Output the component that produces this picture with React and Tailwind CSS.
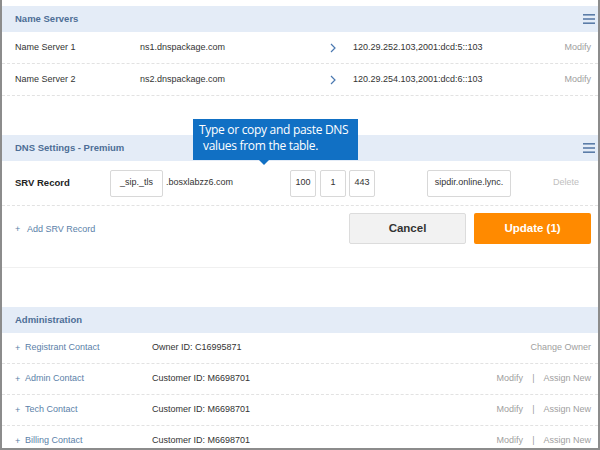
import React from 'react';

const font = { fontFamily: '"Liberation Sans", Arial, sans-serif' };

function Hamburger() {
  return (
    <svg width="12" height="10" viewBox="0 0 12 10" className="shrink-0">
      <rect x="0" y="0" width="12" height="1.6" fill="#5b7ca8" />
      <rect x="0" y="4.2" width="12" height="1.6" fill="#5b7ca8" />
      <rect x="0" y="8.4" width="12" height="1.6" fill="#5b7ca8" />
    </svg>
  );
}

function SectionHeader({ title, menu }) {
  return (
    <div className="h-[26px] bg-[#e4ecf7] flex items-center justify-between pl-[13px] pr-[3px]">
      <span className="text-[9.5px] font-bold text-[#4d6e96]">{title}</span>
      {menu && <Hamburger />}
    </div>
  );
}

function Chevron() {
  return (
    <svg width="6" height="10" viewBox="0 0 6 10">
      <path d="M1 1 L5 5 L1 9" fill="none" stroke="#4a78b0" strokeWidth="1.2" />
    </svg>
  );
}

function NameServerRow({ label, host, ip }) {
  return (
    <div className="h-[32px] flex items-center pl-[13px] pr-[7px] border-b border-dashed border-[#e2e2e2] text-[9px] text-[#333]">
      <span className="w-[125px]">{label}</span>
      <span className="w-[190px]">{host}</span>
      <span className="w-[23px] flex items-center"><Chevron /></span>
      <span className="flex-1">{ip}</span>
      <span className="text-[#a0a0a0]">Modify</span>
    </div>
  );
}

function Box({ w, children }) {
  return (
    <div className={`${w} h-[27px] bg-white border border-[#d8d8d8] rounded-[2px] flex items-center justify-center text-[9px] text-[#333]`}>
      {children}
    </div>
  );
}

function ContactRow({ label, id, actions }) {
  return (
    <div className="h-[31px] flex items-center pl-[13px] pr-[7px] border-b border-dashed border-[#e2e2e2] text-[9px]">
      <span className="w-[137px] flex items-center text-[#5b7fa9]">
        <span className="w-[10px] text-[9px] leading-none">+</span>
        {label}
      </span>
      <span className="flex-1 text-[#333]">{id}</span>
      <span className="text-[#a0a0a0] flex items-center">
        {actions.map((a, i) => (
          <React.Fragment key={a}>
            {i > 0 && <span className="px-[9px]">|</span>}
            <span>{a}</span>
          </React.Fragment>
        ))}
      </span>
    </div>
  );
}

export default function App() {
  return (
    <div style={font} className="w-[600px] h-[450px] bg-white border-l-2 border-r-2 border-b-2 border-[#8c8c8c] overflow-hidden pt-[6px] relative">
      {/* Name servers */}
      <SectionHeader title="Name Servers" menu />
      <NameServerRow label="Name Server 1" host="ns1.dnspackage.com" ip="120.29.252.103,2001:dcd:5::103" />
      <NameServerRow label="Name Server 2" host="ns2.dnspackage.com" ip="120.29.254.103,2001:dcd:6::103" />

      <div className="h-[39px]" />

      {/* DNS settings */}
      <div className="relative">
        <SectionHeader title="DNS Settings - Premium" menu />
        <div className="absolute left-[191px] top-[-16px] w-[165px] h-[41px] bg-[#1170c4] text-white px-[6px] pt-[3px]" style={{ fontFamily: '"Open Sans", "Noto Sans", sans-serif' }}>
          <div className="text-[12px] leading-[16px] tracking-[-0.3px]">Type or copy and paste DNS</div>
          <div className="text-[12px] leading-[16px] tracking-[-0.3px] pl-[4px]">values from the table.</div>
          <div className="absolute left-[66px] bottom-[-5px] w-0 h-0 border-l-[5px] border-r-[5px] border-t-[5px] border-l-transparent border-r-transparent border-t-[#1170c4]" />
        </div>
      </div>
      <div className="h-[45px] flex items-center pl-[13px] border-b border-dashed border-[#e2e2e2] text-[9px] text-[#333]">
        <span className="w-[95px] font-bold text-[9.5px] text-[#222]">SRV Record</span>
        <Box w="w-[53px]">_sip._tls</Box>
        <span className="w-[127px] pl-[3px]">.bosxlabzz6.com</span>
        <Box w="w-[26px]">100</Box>
        <div className="w-[4px]" />
        <Box w="w-[26px]">1</Box>
        <div className="w-[3px]" />
        <Box w="w-[26px]">443</Box>
        <div className="w-[52px]" />
        <Box w="w-[84px]">sipdir.online.lync.</Box>
        <span className="ml-[42px] text-[#c0c0c0]">Delete</span>
      </div>
      <div className="h-[62px] flex items-start pl-[13px] pr-[7px] pt-[7px] border-b border-[#f0f0f0]">
        <span className="mt-[10px] flex items-center text-[9px] text-[#5b7fa9]">
          <span className="w-[12px] text-[9px] leading-none">+</span>
          Add SRV Record
        </span>
        <div className="ml-auto flex gap-[8px]">
          <button className="w-[117px] h-[31px] bg-[#f2f2f2] border border-[#dcdcdc] rounded-[2px] text-[11.5px] font-bold text-[#333]">Cancel</button>
          <button className="w-[117px] h-[31px] bg-[#ff8a00] rounded-[2px] text-[11.5px] font-bold text-white">Update (1)</button>
        </div>
      </div>

      <div className="h-[39px]" />

      {/* Administration */}
      <SectionHeader title="Administration" />
      <ContactRow label="Registrant Contact" id="Owner ID: C16995871" actions={['Change Owner']} />
      <ContactRow label="Admin Contact" id="Customer ID: M6698701" actions={['Modify', 'Assign New']} />
      <ContactRow label="Tech Contact" id="Customer ID: M6698701" actions={['Modify', 'Assign New']} />
      <ContactRow label="Billing Contact" id="Customer ID: M6698701" actions={['Modify', 'Assign New']} />
    </div>
  );
}
